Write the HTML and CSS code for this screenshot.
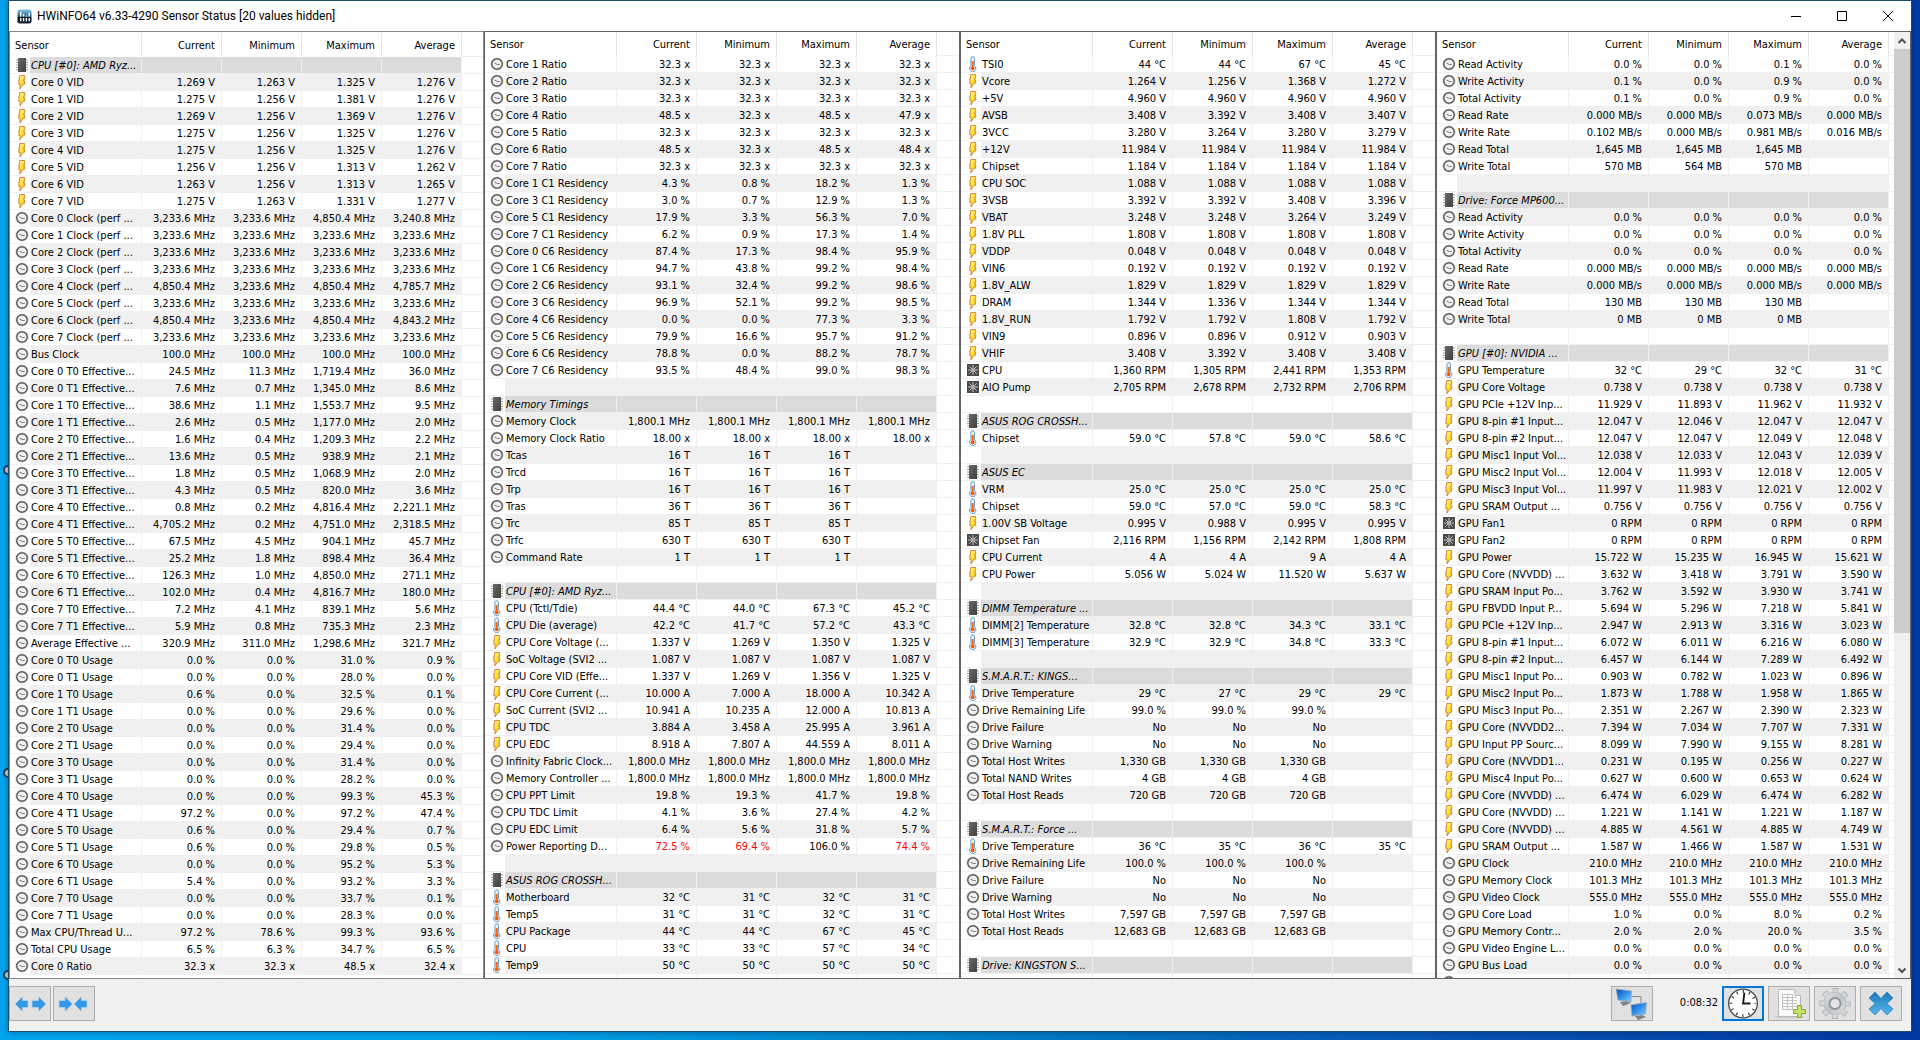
FILE: index.html
```
<!DOCTYPE html>
<html lang="en">
<head>
<meta charset="utf-8">
<title>HWiNFO64 v6.33-4290 Sensor Status</title>
<link rel="stylesheet" href="styles.css">
</head>
<body>
<svg class="sprite" aria-hidden="true">
  <defs>
    <linearGradient id="bolt-fill" x1="0" y1="0" x2="1" y2="1">
      <stop offset="0" stop-color="#fff8b0"/><stop offset=".6" stop-color="#ffe01c"/><stop offset="1" stop-color="#f0a010"/>
    </linearGradient>
    <linearGradient id="chip-fill" x1="0" y1="0" x2="1" y2="1">
      <stop offset="0" stop-color="#6a6a6a"/><stop offset="1" stop-color="#404040"/>
    </linearGradient>
    <linearGradient id="screen-fill" x1="0" y1="0" x2="1" y2="1">
      <stop offset="0" stop-color="#0a4fae"/><stop offset=".5" stop-color="#2f8fec"/><stop offset="1" stop-color="#8fd0ff"/>
    </linearGradient>
    <linearGradient id="gear-fill" x1="0" y1="0" x2="1" y2="1">
      <stop offset="0" stop-color="#e2e5e6"/><stop offset=".5" stop-color="#bcc2c5"/><stop offset="1" stop-color="#dcdfe0"/>
    </linearGradient>
    <linearGradient id="cross-fill" x1="0" y1="0" x2="0" y2="1">
      <stop offset="0" stop-color="#1b78b4"/><stop offset="1" stop-color="#55b8ec"/>
    </linearGradient>
    <linearGradient id="logo-fill" x1="0" y1="0" x2="0" y2="1">
      <stop offset="0" stop-color="#8cc4e4"/><stop offset=".5" stop-color="#1f5f88"/><stop offset=".55" stop-color="#08131c"/><stop offset="1" stop-color="#1a2630"/>
    </linearGradient>
  </defs>
  <symbol id="v" viewBox="0 0 16 16">
    <path d="M5.700 1.500h5v4H9.700v1.500h1v3.200H9.200L5.800 15l.4-4.500H4.800V8.300h.8L4.300 6.200h1z" fill="url(#bolt-fill)" stroke="#cc7030" stroke-width=".8"/>
  </symbol>
  <symbol id="c" viewBox="0 0 16 16">
    <circle cx="8" cy="8" r="6.500" fill="#c4c4c4"/>
    <circle cx="8" cy="8" r="5.200" fill="#f0f0f0" stroke="#484848" stroke-width="1.200"/>
    <path d="M5.500 7.200l3 1.300h2.200" fill="none" stroke="#807070" stroke-width="1"/>
  </symbol>
  <symbol id="t" viewBox="0 0 16 16">
    <path d="M5.900 2.500a1.800 1.800 0 013.600 0v7.300a3.200 3.200 0 11-3.600 0z" fill="#e4f2fb" stroke="#6a9cc4" stroke-width="1"/>
    <path d="M7.700 5v7" stroke="#f06414" stroke-width="2"/>
    <circle cx="7.700" cy="12.300" r="1.900" fill="#f05a0c"/>
  </symbol>
  <symbol id="f" viewBox="0 0 16 16">
    <rect x="2" y="2" width="12" height="12" fill="#4a4a4a"/>
    <path d="M8 3v10M3 8h10M4.300 4.300l7.400 7.400M11.700 4.300l-7.400 7.400" stroke="#c4c4c4" stroke-width="1"/>
    <circle cx="8" cy="8" r="1.700" fill="#c4a8b0"/>
  </symbol>
  <symbol id="g" viewBox="0 0 16 16">
    <path d="M2 3h12M2 5.500h12M2 8h12M2 10.500h12M2 13h12" stroke="#a0a0a0" stroke-width="1.200"/>
    <rect x="4" y="1" width="8" height="14" fill="url(#chip-fill)"/>
  </symbol>
</svg>

<span class="speck speck-1"></span>
<span class="speck speck-2"></span>
<span class="speck speck-3"></span>

<div class="window">
  <header class="titlebar">
    <svg class="logo" viewBox="0 0 16 16" aria-hidden="true">
      <rect x=".5" y=".5" width="15" height="15" rx="2.500" fill="url(#logo-fill)"/>
      <path d="M4 3v5M4 9.500V13M7 5v3M7 9.500V13M10 7v1M10 9.500V13M13 4v4M13 9.500V13" stroke="#fff" stroke-width="1.500"/>
    </svg>
    <h1>HWiNFO64 v6.33-4290 Sensor Status [20 values hidden]</h1>
    <div class="caption-buttons">
      <button type="button" aria-label="Minimize"><svg viewBox="0 0 10 10"><path d="M0 5.500h10"/></svg></button>
      <button type="button" aria-label="Maximize"><svg viewBox="0 0 10 10"><path d="M.5.5h9v9h-9z"/></svg></button>
      <button type="button" aria-label="Close"><svg viewBox="0 0 10 10"><path d="M0 0l10 10M10 0L0 10"/></svg></button>
    </div>
  </header>

  <main class="panels">
    <section class="panel first" id="panel-1"></section>
    <section class="panel" id="panel-2"></section>
    <section class="panel" id="panel-3"></section>
    <section class="panel last" id="panel-4">
      <div class="scrollbar">
        <button type="button" aria-label="Scroll up"><svg viewBox="0 0 10 10"><path d="M1.500 7L5 3.500 8.500 7"/></svg></button>
        <div class="track"><div class="thumb"></div></div>
        <button type="button" aria-label="Scroll down"><svg viewBox="0 0 10 10"><path d="M1.500 3.500L5 7l3.500-3.500"/></svg></button>
      </div>
    </section>
  </main>

  <footer class="toolbar">
    <div class="columns">
      <button type="button" class="tool" aria-label="Expand columns">
        <svg viewBox="0 0 40 33"><path d="M5 17l7.500-7.500v4H18v7h-5.500v4z M36 17l-7.500-7.500v4H22v7h6.500v4z" fill="#3398ea" stroke="#b4cfe6" stroke-width=".8"/></svg>
      </button>
      <button type="button" class="tool" aria-label="Shrink columns">
        <svg viewBox="0 0 40 33"><path d="M18.500 17L11 9.500v4H5v7h6v4z M20 17l7.500-7.500v4H33v7h-5.500v4z" fill="#3398ea" stroke="#b4cfe6" stroke-width=".8"/></svg>
      </button>
    </div>
    <button type="button" class="tool" aria-label="Remote sensors">
      <svg viewBox="0 0 40 33">
        <path d="M20 9.500h9v8" fill="none" stroke="#8c8c8c"/>
        <path d="M8 15l7-1 4 2-8 3z" fill="#7c8288"/>
        <path d="M4 2l15.500 2-.5 11L6 13z" fill="url(#screen-fill)" stroke="#9aa6b0" stroke-width=".8"/>
        <path d="M23 29l7-1 4 2-8 3z" fill="#7c8288"/>
        <path d="M34.500 15.500L19 18l1 11 13.500-2z" fill="url(#screen-fill)" stroke="#9aa6b0" stroke-width=".8"/>
      </svg>
    </button>
    <time class="elapsed">0:08:32</time>
    <button type="button" class="tool active" aria-label="Reset clock">
      <svg viewBox="0 0 40 33">
        <circle cx="20" cy="16.500" r="15.300" fill="#fff" stroke="#484848" stroke-width="1.400"/>
        <circle cx="20" cy="16.500" r="12.800" fill="none" stroke="#333" stroke-width="3" stroke-dasharray="1.200 5.502" stroke-dashoffset=".6"/>
        <path d="M20 17.500L21.500 5M19 16.500h9" stroke="#1c1c1c" stroke-width="2" fill="none"/>
      </svg>
    </button>
    <button type="button" class="tool" aria-label="Logging start">
      <svg viewBox="0 0 40 33">
        <ellipse cx="20" cy="30" rx="15" ry="1.500" fill="#cccccc"/>
        <path d="M9.500 2.500H26l5.500 6V29.500h-22z" fill="#fafafa" stroke="#b8b8b8"/>
        <path d="M26 2.500v6h5.500" fill="#e4e4e4" stroke="#b8b8b8"/>
        <path d="M13 7.500h11M13 10.500h15M13 13.500h15M13 16.500h15M13 19.500h15M13 22.500h15M13.500 7v16M18.500 7v16M23.500 7v16" stroke="#c4c4c4" fill="none"/>
        <path d="M28.500 18.500h4v4h4v4h-4v4h-4v-4h-4v-4h4z" fill="#c4e468" stroke="#7aae2c"/>
      </svg>
    </button>
    <button type="button" class="tool" aria-label="Settings">
      <svg viewBox="0 0 40 33">
        <circle cx="20" cy="16.500" r="13.300" fill="none" stroke="#a4aaae" stroke-width="4.600" stroke-dasharray="5.600 4.846" stroke-dashoffset="2.800"/>
        <circle cx="20" cy="16.500" r="11.500" fill="#a4aaae"/>
        <circle cx="20" cy="16.500" r="12.900" fill="none" stroke="#d4d8da" stroke-width="3.800" stroke-dasharray="4.400 5.732" stroke-dashoffset="2.200"/>
        <circle cx="20" cy="16.500" r="10.900" fill="url(#gear-fill)"/>
        <circle cx="20" cy="16.500" r="5.500" fill="#e6e6e6" stroke="#8e9498" stroke-width="1.800"/>
      </svg>
    </button>
    <button type="button" class="tool" aria-label="Close sensors">
      <svg viewBox="0 0 40 33"><path d="M14 5l6 6.500L26 5l6 6-6 5.500 6 5.500-6 6-6-6.500-6 6.500-6-6 6-5.500L8 11z" fill="url(#cross-fill)" stroke="#2a86bc" stroke-width=".8"/></svg>
    </button>
  </footer>
</div>
<script src="sensors.js"></script>
</body>
</html>
```
FILE: styles.css
```
* { box-sizing: border-box; }

body {
  margin: 0;
  min-height: 100vh;
  background: linear-gradient(90deg, #00a3ee 0, #00a0e6 25%, #0080c6 50%, #0854b2 75%, #0239a3 100%);
  font: 11px/14px "DejaVu Sans Condensed", "Noto Sans", sans-serif;
  color: #000;
}

button { font: inherit; padding: 0; border: 0; background: none; }
.sprite { position: absolute; width: 0; height: 0; }

/* desktop icons peeking out beside the window */
.speck {
  position: absolute;
  left: 3px;
  width: 10px;
  height: 10px;
  border: 2px solid #123c58;
  border-radius: 50%;
  background: #d8d0c8;
}
.speck-1 { top: 465px; }
.speck-2 { top: 768px; }
.speck-3 { top: 970px; }

.window {
  position: relative;
  display: flex;
  flex-direction: column;
  height: calc(100vh - 8px);
  margin: 0 8px;
  border: 1px solid #1d4a68;
  background: #f0f0f0;
  box-shadow: 0 0 6px rgba(0, 30, 80, .4);
}

.titlebar {
  display: flex;
  align-items: center;
  flex: none;
  height: 30px;
  padding-left: 8px;
  background: #fff;
}
.titlebar h1 {
  flex: 1;
  margin: 0;
  font: 12px/16px Roboto, "Noto Sans", sans-serif;
}
.logo { width: 15px; height: 15px; margin-right: 5px; }
.caption-buttons { display: flex; }
.caption-buttons button { width: 46px; height: 30px; }
.caption-buttons svg { display: block; width: 10px; height: 10px; margin: auto; fill: none; stroke: #000; }

.panels {
  display: grid;
  grid-template-columns: 475fr 476fr 476fr 475fr;
  flex: 1;
  min-height: 0;
}
.panel {
  display: flex;
  min-width: 0;
  overflow: hidden;
  border: 1px solid #646464;
  background: #fff;
}
.panel.first { padding-top: 1px; border-color: #828790; }

.sensors {
  flex: 1;
  align-self: flex-start;
  width: 0;
  table-layout: fixed;
  border-collapse: separate;
  border-spacing: 0;
  white-space: nowrap;
}
.sensors th, .sensors td {
  height: 17px;
  padding: 0;
  border-right: 1px solid #f0f0f0;
  border-bottom: 1px solid #f0f0f0;
  text-align: right;
  font-weight: normal;
  overflow: hidden;
}
.sensors .num { padding-top: 2px; padding-right: 6px; }
.sensors .name { padding-top: 2px; padding-left: 1px; text-align: left; }
.sensors .icon { padding-left: 4px; border-right: 0; }
.sensors .icon svg { display: block; width: 16px; height: 16px; }
.sensors td.rest { border-right: 0; }

.sensors thead th { height: 24px; border-bottom: 0; border-color: #e5e5e5; }
.sensors thead .name { padding-left: 5px; }

.sensors tbody tr:nth-child(even) .fill { background: #f0f0f0; }
.sensors tbody tr.group .fill { background: #dcdcdc; }
.sensors .group .name { font-style: italic; }
.sensors .alert { color: #f00; }

.col-icon { width: 20px; }
.col-name { width: 112px; }
.col-num { width: 80px; }

.scrollbar { display: flex; flex-direction: column; flex: none; order: 2; width: 16px; background: #f0f0f0; }
.scrollbar button { height: 17px; }
.scrollbar svg { display: block; width: 10px; height: 10px; margin: auto; fill: none; stroke: #505050; stroke-width: 2; }
.track { flex: 1; }
.thumb { height: 64%; background: #cdcdcd; }

.toolbar {
  display: flex;
  align-items: flex-start;
  flex: none;
  gap: 4px;
  height: 52px;
  padding: 7px 9px 0 0;
}
.tool { width: 42px; height: 35px; border: 1px solid #adadad; background: #e1e1e1; }
.tool svg { display: block; width: 40px; height: 33px; }
.tool.active { border: 2px solid #0078d7; }
.tool.active svg { width: 38px; height: 31px; }
.columns { display: flex; gap: 2px; margin-right: auto; }
.elapsed { width: 61px; line-height: 33px; text-align: right; }
```
FILE: sensors.js
```
// One reading per line: icon|name|current|minimum|maximum|average.
// Icons: g group header, v electrical, c generic, t temperature, f fan. "-" is a spacer row.
// A leading "!" marks a value outside its limits.
const same = (v, n = 4) => Array(n).fill(v).join("|");

const panels = {
  "panel-1": `
g|CPU [#0]: AMD Ryz...
v|Core 0 VID|1.269 V|1.263 V|1.325 V|1.276 V
v|Core 1 VID|1.275 V|1.256 V|1.381 V|1.276 V
v|Core 2 VID|1.269 V|1.256 V|1.369 V|1.276 V
v|Core 3 VID|1.275 V|1.256 V|1.325 V|1.276 V
v|Core 4 VID|1.275 V|1.256 V|1.325 V|1.276 V
v|Core 5 VID|1.256 V|1.256 V|1.313 V|1.262 V
v|Core 6 VID|1.263 V|1.256 V|1.313 V|1.265 V
v|Core 7 VID|1.275 V|1.263 V|1.331 V|1.277 V
c|Core 0 Clock (perf ...|3,233.6 MHz|3,233.6 MHz|4,850.4 MHz|3,240.8 MHz
c|Core 1 Clock (perf ...|${same("3,233.6 MHz")}
c|Core 2 Clock (perf ...|${same("3,233.6 MHz")}
c|Core 3 Clock (perf ...|${same("3,233.6 MHz")}
c|Core 4 Clock (perf ...|4,850.4 MHz|3,233.6 MHz|4,850.4 MHz|4,785.7 MHz
c|Core 5 Clock (perf ...|${same("3,233.6 MHz")}
c|Core 6 Clock (perf ...|4,850.4 MHz|3,233.6 MHz|4,850.4 MHz|4,843.2 MHz
c|Core 7 Clock (perf ...|${same("3,233.6 MHz")}
c|Bus Clock|${same("100.0 MHz")}
c|Core 0 T0 Effective...|24.5 MHz|11.3 MHz|1,719.4 MHz|36.0 MHz
c|Core 0 T1 Effective...|7.6 MHz|0.7 MHz|1,345.0 MHz|8.6 MHz
c|Core 1 T0 Effective...|38.6 MHz|1.1 MHz|1,553.7 MHz|9.5 MHz
c|Core 1 T1 Effective...|2.6 MHz|0.5 MHz|1,177.0 MHz|2.0 MHz
c|Core 2 T0 Effective...|1.6 MHz|0.4 MHz|1,209.3 MHz|2.2 MHz
c|Core 2 T1 Effective...|13.6 MHz|0.5 MHz|938.9 MHz|2.1 MHz
c|Core 3 T0 Effective...|1.8 MHz|0.5 MHz|1,068.9 MHz|2.0 MHz
c|Core 3 T1 Effective...|4.3 MHz|0.5 MHz|820.0 MHz|3.6 MHz
c|Core 4 T0 Effective...|0.8 MHz|0.2 MHz|4,816.4 MHz|2,221.1 MHz
c|Core 4 T1 Effective...|4,705.2 MHz|0.2 MHz|4,751.0 MHz|2,318.5 MHz
c|Core 5 T0 Effective...|67.5 MHz|4.5 MHz|904.1 MHz|45.7 MHz
c|Core 5 T1 Effective...|25.2 MHz|1.8 MHz|898.4 MHz|36.4 MHz
c|Core 6 T0 Effective...|126.3 MHz|1.0 MHz|4,850.0 MHz|271.1 MHz
c|Core 6 T1 Effective...|102.0 MHz|0.4 MHz|4,816.7 MHz|180.0 MHz
c|Core 7 T0 Effective...|7.2 MHz|4.1 MHz|839.1 MHz|5.6 MHz
c|Core 7 T1 Effective...|5.9 MHz|0.8 MHz|735.3 MHz|2.3 MHz
c|Average Effective ...|320.9 MHz|311.0 MHz|1,298.6 MHz|321.7 MHz
c|Core 0 T0 Usage|0.0 %|0.0 %|31.0 %|0.9 %
c|Core 0 T1 Usage|0.0 %|0.0 %|28.0 %|0.0 %
c|Core 1 T0 Usage|0.6 %|0.0 %|32.5 %|0.1 %
c|Core 1 T1 Usage|0.0 %|0.0 %|29.6 %|0.0 %
c|Core 2 T0 Usage|0.0 %|0.0 %|31.4 %|0.0 %
c|Core 2 T1 Usage|0.0 %|0.0 %|29.4 %|0.0 %
c|Core 3 T0 Usage|0.0 %|0.0 %|31.4 %|0.0 %
c|Core 3 T1 Usage|0.0 %|0.0 %|28.2 %|0.0 %
c|Core 4 T0 Usage|0.0 %|0.0 %|99.3 %|45.3 %
c|Core 4 T1 Usage|97.2 %|0.0 %|97.2 %|47.4 %
c|Core 5 T0 Usage|0.6 %|0.0 %|29.4 %|0.7 %
c|Core 5 T1 Usage|0.6 %|0.0 %|29.8 %|0.5 %
c|Core 6 T0 Usage|0.0 %|0.0 %|95.2 %|5.3 %
c|Core 6 T1 Usage|5.4 %|0.0 %|93.2 %|3.3 %
c|Core 7 T0 Usage|0.0 %|0.0 %|33.7 %|0.1 %
c|Core 7 T1 Usage|0.0 %|0.0 %|28.3 %|0.0 %
c|Max CPU/Thread U...|97.2 %|78.6 %|99.3 %|93.6 %
c|Total CPU Usage|6.5 %|6.3 %|34.7 %|6.5 %
c|Core 0 Ratio|32.3 x|32.3 x|48.5 x|32.4 x
-`,
  "panel-2": `
c|Core 1 Ratio|${same("32.3 x")}
c|Core 2 Ratio|${same("32.3 x")}
c|Core 3 Ratio|${same("32.3 x")}
c|Core 4 Ratio|48.5 x|32.3 x|48.5 x|47.9 x
c|Core 5 Ratio|${same("32.3 x")}
c|Core 6 Ratio|48.5 x|32.3 x|48.5 x|48.4 x
c|Core 7 Ratio|${same("32.3 x")}
c|Core 1 C1 Residency|4.3 %|0.8 %|18.2 %|1.3 %
c|Core 3 C1 Residency|3.0 %|0.7 %|12.9 %|1.3 %
c|Core 5 C1 Residency|17.9 %|3.3 %|56.3 %|7.0 %
c|Core 7 C1 Residency|6.2 %|0.9 %|17.3 %|1.4 %
c|Core 0 C6 Residency|87.4 %|17.3 %|98.4 %|95.9 %
c|Core 1 C6 Residency|94.7 %|43.8 %|99.2 %|98.4 %
c|Core 2 C6 Residency|93.1 %|32.4 %|99.2 %|98.6 %
c|Core 3 C6 Residency|96.9 %|52.1 %|99.2 %|98.5 %
c|Core 4 C6 Residency|0.0 %|0.0 %|77.3 %|3.3 %
c|Core 5 C6 Residency|79.9 %|16.6 %|95.7 %|91.2 %
c|Core 6 C6 Residency|78.8 %|0.0 %|88.2 %|78.7 %
c|Core 7 C6 Residency|93.5 %|48.4 %|99.0 %|98.3 %
-
g|Memory Timings
c|Memory Clock|${same("1,800.1 MHz")}
c|Memory Clock Ratio|${same("18.00 x")}
c|Tcas|${same("16 T", 3)}
c|Trcd|${same("16 T", 3)}
c|Trp|${same("16 T", 3)}
c|Tras|${same("36 T", 3)}
c|Trc|${same("85 T", 3)}
c|Trfc|${same("630 T", 3)}
c|Command Rate|${same("1 T", 3)}
-
g|CPU [#0]: AMD Ryz...
t|CPU (Tctl/Tdie)|44.4 °C|44.0 °C|67.3 °C|45.2 °C
t|CPU Die (average)|42.2 °C|41.7 °C|57.2 °C|43.3 °C
v|CPU Core Voltage (...|1.337 V|1.269 V|1.350 V|1.325 V
v|SoC Voltage (SVI2 ...|${same("1.087 V")}
v|CPU Core VID (Effe...|1.337 V|1.269 V|1.356 V|1.325 V
v|CPU Core Current (...|10.000 A|7.000 A|18.000 A|10.342 A
v|SoC Current (SVI2 ...|10.941 A|10.235 A|12.000 A|10.813 A
v|CPU TDC|3.884 A|3.458 A|25.995 A|3.961 A
v|CPU EDC|8.918 A|7.807 A|44.559 A|8.011 A
c|Infinity Fabric Clock...|${same("1,800.0 MHz")}
c|Memory Controller ...|${same("1,800.0 MHz")}
c|CPU PPT Limit|19.8 %|19.3 %|41.7 %|19.8 %
c|CPU TDC Limit|4.1 %|3.6 %|27.4 %|4.2 %
c|CPU EDC Limit|6.4 %|5.6 %|31.8 %|5.7 %
c|Power Reporting D...|!72.5 %|!69.4 %|106.0 %|!74.4 %
-
g|ASUS ROG CROSSH...
t|Motherboard|32 °C|31 °C|32 °C|31 °C
t|Temp5|31 °C|31 °C|32 °C|31 °C
t|CPU Package|44 °C|44 °C|67 °C|45 °C
t|CPU|33 °C|33 °C|57 °C|34 °C
t|Temp9|${same("50 °C")}
-`,
  "panel-3": `
t|TSI0|44 °C|44 °C|67 °C|45 °C
v|Vcore|1.264 V|1.256 V|1.368 V|1.272 V
v|+5V|${same("4.960 V")}
v|AVSB|3.408 V|3.392 V|3.408 V|3.407 V
v|3VCC|3.280 V|3.264 V|3.280 V|3.279 V
v|+12V|${same("11.984 V")}
v|Chipset|${same("1.184 V")}
v|CPU SOC|${same("1.088 V")}
v|3VSB|3.392 V|3.392 V|3.408 V|3.396 V
v|VBAT|3.248 V|3.248 V|3.264 V|3.249 V
v|1.8V PLL|${same("1.808 V")}
v|VDDP|${same("0.048 V")}
v|VIN6|${same("0.192 V")}
v|1.8V_ALW|${same("1.829 V")}
v|DRAM|1.344 V|1.336 V|1.344 V|1.344 V
v|1.8V_RUN|1.792 V|1.792 V|1.808 V|1.792 V
v|VIN9|0.896 V|0.896 V|0.912 V|0.903 V
v|VHIF|3.408 V|3.392 V|3.408 V|3.408 V
f|CPU|1,360 RPM|1,305 RPM|2,441 RPM|1,353 RPM
f|AIO Pump|2,705 RPM|2,678 RPM|2,732 RPM|2,706 RPM
-
g|ASUS ROG CROSSH...
t|Chipset|59.0 °C|57.8 °C|59.0 °C|58.6 °C
-
g|ASUS EC
t|VRM|${same("25.0 °C")}
t|Chipset|59.0 °C|57.0 °C|59.0 °C|58.3 °C
v|1.00V SB Voltage|0.995 V|0.988 V|0.995 V|0.995 V
f|Chipset Fan|2,116 RPM|1,156 RPM|2,142 RPM|1,808 RPM
v|CPU Current|4 A|4 A|9 A|4 A
v|CPU Power|5.056 W|5.024 W|11.520 W|5.637 W
-
g|DIMM Temperature ...
t|DIMM[2] Temperature|32.8 °C|32.8 °C|34.3 °C|33.1 °C
t|DIMM[3] Temperature|32.9 °C|32.9 °C|34.8 °C|33.3 °C
-
g|S.M.A.R.T.: KINGS...
t|Drive Temperature|29 °C|27 °C|29 °C|29 °C
c|Drive Remaining Life|${same("99.0 %", 3)}
c|Drive Failure|${same("No", 3)}
c|Drive Warning|${same("No", 3)}
c|Total Host Writes|${same("1,330 GB", 3)}
c|Total NAND Writes|${same("4 GB", 3)}
c|Total Host Reads|${same("720 GB", 3)}
-
g|S.M.A.R.T.: Force ...
t|Drive Temperature|36 °C|35 °C|36 °C|35 °C
c|Drive Remaining Life|${same("100.0 %", 3)}
c|Drive Failure|${same("No", 3)}
c|Drive Warning|${same("No", 3)}
c|Total Host Writes|${same("7,597 GB", 3)}
c|Total Host Reads|${same("12,683 GB", 3)}
-
g|Drive: KINGSTON S...
-`,
  "panel-4": `
c|Read Activity|0.0 %|0.0 %|0.1 %|0.0 %
c|Write Activity|0.1 %|0.0 %|0.9 %|0.0 %
c|Total Activity|0.1 %|0.0 %|0.9 %|0.0 %
c|Read Rate|0.000 MB/s|0.000 MB/s|0.073 MB/s|0.000 MB/s
c|Write Rate|0.102 MB/s|0.000 MB/s|0.981 MB/s|0.016 MB/s
c|Read Total|${same("1,645 MB", 3)}
c|Write Total|570 MB|564 MB|570 MB
-
g|Drive: Force MP600...
c|Read Activity|${same("0.0 %")}
c|Write Activity|${same("0.0 %")}
c|Total Activity|${same("0.0 %")}
c|Read Rate|${same("0.000 MB/s")}
c|Write Rate|${same("0.000 MB/s")}
c|Read Total|${same("130 MB", 3)}
c|Write Total|${same("0 MB", 3)}
-
g|GPU [#0]: NVIDIA ...
t|GPU Temperature|32 °C|29 °C|32 °C|31 °C
v|GPU Core Voltage|${same("0.738 V")}
v|GPU PCIe +12V Inp...|11.929 V|11.893 V|11.962 V|11.932 V
v|GPU 8-pin #1 Input...|12.047 V|12.046 V|12.047 V|12.047 V
v|GPU 8-pin #2 Input...|12.047 V|12.047 V|12.049 V|12.048 V
v|GPU Misc1 Input Vol...|12.038 V|12.033 V|12.043 V|12.039 V
v|GPU Misc2 Input Vol...|12.004 V|11.993 V|12.018 V|12.005 V
v|GPU Misc3 Input Vol...|11.997 V|11.983 V|12.021 V|12.002 V
v|GPU SRAM Output ...|${same("0.756 V")}
f|GPU Fan1|${same("0 RPM")}
f|GPU Fan2|${same("0 RPM")}
v|GPU Power|15.722 W|15.235 W|16.945 W|15.621 W
v|GPU Core (NVVDD) ...|3.632 W|3.418 W|3.791 W|3.590 W
v|GPU SRAM Input Po...|3.762 W|3.592 W|3.930 W|3.741 W
v|GPU FBVDD Input P...|5.694 W|5.296 W|7.218 W|5.841 W
v|GPU PCIe +12V Inp...|2.947 W|2.913 W|3.316 W|3.023 W
v|GPU 8-pin #1 Input...|6.072 W|6.011 W|6.216 W|6.080 W
v|GPU 8-pin #2 Input...|6.457 W|6.144 W|7.289 W|6.492 W
v|GPU Misc1 Input Po...|0.903 W|0.782 W|1.023 W|0.896 W
v|GPU Misc2 Input Po...|1.873 W|1.788 W|1.958 W|1.865 W
v|GPU Misc3 Input Po...|2.351 W|2.267 W|2.390 W|2.323 W
v|GPU Core (NVVDD2...|7.394 W|7.034 W|7.707 W|7.331 W
v|GPU Input PP Sourc...|8.099 W|7.990 W|9.155 W|8.281 W
v|GPU Core (NVVDD1...|0.231 W|0.195 W|0.256 W|0.227 W
v|GPU Misc4 Input Po...|0.627 W|0.600 W|0.653 W|0.624 W
v|GPU Core (NVVDD) ...|6.474 W|6.029 W|6.474 W|6.282 W
v|GPU Core (NVVDD) ...|1.221 W|1.141 W|1.221 W|1.187 W
v|GPU Core (NVVDD) ...|4.885 W|4.561 W|4.885 W|4.749 W
v|GPU SRAM Output ...|1.587 W|1.466 W|1.587 W|1.531 W
c|GPU Clock|${same("210.0 MHz")}
c|GPU Memory Clock|${same("101.3 MHz")}
c|GPU Video Clock|${same("555.0 MHz")}
c|GPU Core Load|1.0 %|0.0 %|8.0 %|0.2 %
c|GPU Memory Contr...|2.0 %|2.0 %|20.0 %|3.5 %
c|GPU Video Engine L...|${same("0.0 %")}
c|GPU Bus Load|${same("0.0 %")}
c|`,
};

const head = `
<colgroup><col class="col-icon"><col class="col-name"><col class="col-num"><col class="col-num"><col class="col-num"><col class="col-num"><col></colgroup>
<thead><tr><th class="name" scope="col" colspan="2">Sensor</th>${["Current", "Minimum", "Maximum", "Average"]
  .map((t) => `<th class="num" scope="col">${t}</th>`).join("")}<td class="rest"></td></tr></thead>`;

function row(line) {
  const [kind, name = "", ...values] = line.split("|");
  const icon = kind === "-" ? "" : `<svg aria-hidden="true"><use href="#${kind}"/></svg>`;
  const cells = [0, 1, 2, 3].map((i) => {
    const v = values[i] || "";
    return v[0] === "!"
      ? `<td class="num fill alert">${v.slice(1)}</td>`
      : `<td class="num fill">${v}</td>`;
  });
  return `<tr${kind === "g" ? ' class="group"' : ""}><td class="icon">${icon}</td>` +
    `<th class="name fill" scope="row">${name}</th>${cells.join("")}<td class="rest"></td></tr>`;
}

for (const [id, text] of Object.entries(panels)) {
  const table = document.createElement("table");
  table.className = "sensors";
  table.innerHTML = `${head}<tbody>${text.trim().split("\n").map(row).join("")}</tbody>`;
  document.getElementById(id).prepend(table);
}
```
